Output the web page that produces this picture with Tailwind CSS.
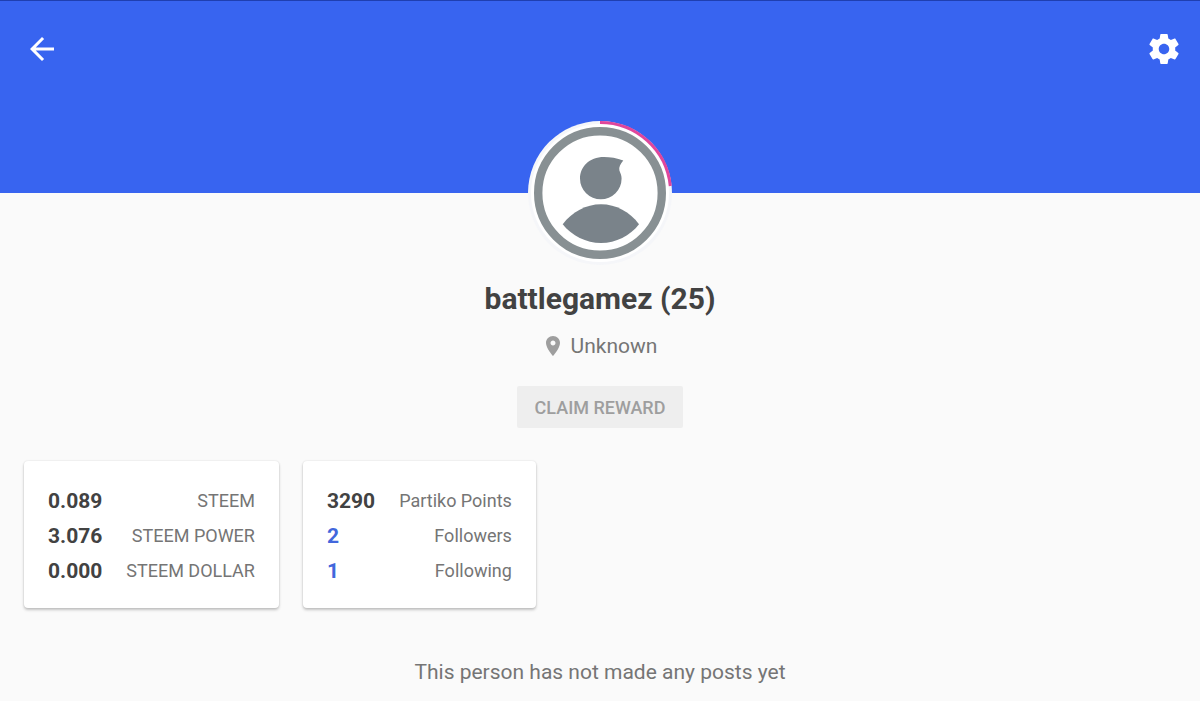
<!DOCTYPE html>
<html lang="en">
<head>
  <meta charset="UTF-8" />
  <meta name="viewport" content="width=device-width, initial-scale=1.0" />
  <title>battlegamez - Profile</title>
  <script src="https://cdn.jsdelivr.net/npm/@tailwindcss/browser@4"></script>
</head>
<body class="bg-[#fafafa] text-[#757575] font-['Roboto',sans-serif] min-h-screen">
  <header class="h-[193px] bg-[#3864f0] border-t border-[#1f3fb0] px-6 pt-[30px] pr-[18px] flex items-start justify-between">
    <button type="button" aria-label="Back" class="text-white">
      <svg class="size-9" viewBox="0 0 24 24" fill="currentColor"><path d="M20 11H7.83l5.59-5.59L12 4l-8 8 8 8 1.41-1.41L7.83 13H20v-2z" /></svg>
    </button>
    <button type="button" aria-label="Settings" class="text-white">
      <svg class="size-9" viewBox="0 0 24 24" fill="currentColor"><path d="M19.43 12.98c.04-.32.07-.64.07-.98s-.03-.66-.07-.98l2.11-1.65c.19-.15.24-.42.12-.64l-2-3.46c-.12-.22-.39-.3-.61-.22l-2.49 1c-.52-.4-1.08-.73-1.69-.98l-.38-2.65C14.46 2.18 14.25 2 14 2h-4c-.25 0-.46.18-.49.42l-.38 2.65c-.61.25-1.17.59-1.69.98l-2.49-1c-.23-.09-.49 0-.61.22l-2 3.46c-.13.22-.07.49.12.64l2.11 1.65c-.04.32-.07.65-.07.98s.03.66.07.98l-2.11 1.65c-.19.15-.24.42-.12.64l2 3.46c.12.22.39.3.61.22l2.49-1c.52.4 1.08.73 1.69.98l.38 2.65c.03.24.24.42.49.42h4c.25 0 .46-.18.49-.42l.38-2.65c.61-.25 1.17-.59 1.69-.98l2.49 1c.23.09.49 0 .61-.22l2-3.46c.12-.22.07-.49-.12-.64l-2.11-1.65zM12 15.5c-1.93 0-3.5-1.57-3.5-3.5s1.57-3.5 3.5-3.5 3.5 1.57 3.5 3.5-1.57 3.5-3.5 3.5z" /></svg>
    </button>
  </header>

  <main>
    <section class="-mt-[72px] flex flex-col items-center">
      <!-- avatar with voting power ring -->
      <svg class="size-36" viewBox="0 0 144 144" role="img" aria-label="battlegamez avatar">
        <circle cx="72" cy="72" r="72" fill="#f5f6f9" />
        <circle cx="72" cy="72" r="69" fill="#fff" />
        <path d="M72 1.5A70.5 70.5 0 0 1 142.3 65" fill="none" stroke="#e0459b" stroke-width="3" />
        <circle cx="72" cy="72" r="61.8" fill="#fff" stroke="#889093" stroke-width="8.4" />
        <g fill="#7a838a">
          <path d="M95.3 39.6C89 37 82 36 76 36C61 36 52 46 52 57.5A20.8 20.8 0 0 0 93.6 57.5C93.6 54.5 92.4 52 91.4 49.5C90.6 46.5 92.5 43 95.3 39.6z" />
          <path d="M34.7 103.3C44 91 58 83.3 73 83.3S102 91 111 103.3C102 115 88 122 73 122S44 115 34.7 103.3z" />
        </g>
      </svg>

      <h1 class="mt-4 text-[30px] leading-9 font-bold text-[#424242]">battlegamez (25)</h1>
      <p class="mt-[17px] flex items-center gap-2 text-[21px] leading-6">
        <svg class="size-5 text-[#9e9e9e]" viewBox="2 2 20 20" fill="currentColor"><path d="M12 2C8.13 2 5 5.13 5 9c0 5.25 7 13 7 13s7-7.75 7-13c0-3.87-3.13-7-7-7zm0 9.5c-1.38 0-2.5-1.12-2.5-2.5s1.12-2.5 2.5-2.5 2.5 1.12 2.5 2.5-1.12 2.5-2.5 2.5z" /></svg>
        Unknown
      </p>
      <button type="button" disabled class="mt-7 h-[42px] px-[18px] rounded-xs bg-[#eeeeee] text-[18px] font-medium text-[#9e9e9e]">CLAIM REWARD</button>
    </section>

    <section class="mt-[33px] px-6 flex flex-wrap items-start gap-6">
      <div class="rounded-sm bg-white px-6 pt-[22px] pb-5 shadow-[0_2px_3px_rgba(0,0,0,0.22),0_0_2px_rgba(0,0,0,0.12)]">
        <table class="text-[18px]">
          <tr class="h-[35px]">
            <th scope="row" class="pr-6 text-left text-[21px] leading-6 font-bold text-[#424242]">0.089</th>
            <td class="text-right">STEEM</td>
          </tr>
          <tr class="h-[35px]">
            <th scope="row" class="pr-6 text-left text-[21px] leading-6 font-bold text-[#424242]">3.076</th>
            <td class="text-right">STEEM POWER</td>
          </tr>
          <tr class="h-[35px]">
            <th scope="row" class="pr-6 text-left text-[21px] leading-6 font-bold text-[#424242]">0.000</th>
            <td class="text-right">STEEM DOLLAR</td>
          </tr>
        </table>
      </div>

      <div class="rounded-sm bg-white px-6 pt-[22px] pb-5 shadow-[0_2px_3px_rgba(0,0,0,0.22),0_0_2px_rgba(0,0,0,0.12)]">
        <table class="text-[18px]">
          <tr class="h-[35px]">
            <th scope="row" class="pr-6 text-left text-[21px] leading-6 font-bold text-[#424242]">3290</th>
            <td class="text-right">Partiko Points</td>
          </tr>
          <tr class="h-[35px]">
            <th scope="row" class="pr-6 text-left text-[21px] leading-6 font-bold text-[#4267dc]"><a href="#followers">2</a></th>
            <td class="text-right">Followers</td>
          </tr>
          <tr class="h-[35px]">
            <th scope="row" class="pr-6 text-left text-[21px] leading-6 font-bold text-[#4267dc]"><a href="#following">1</a></th>
            <td class="text-right">Following</td>
          </tr>
        </table>
      </div>
    </section>

    <p class="mt-[52px] text-center text-[21px] leading-6">This person has not made any posts yet</p>
  </main>
</body>
</html>
